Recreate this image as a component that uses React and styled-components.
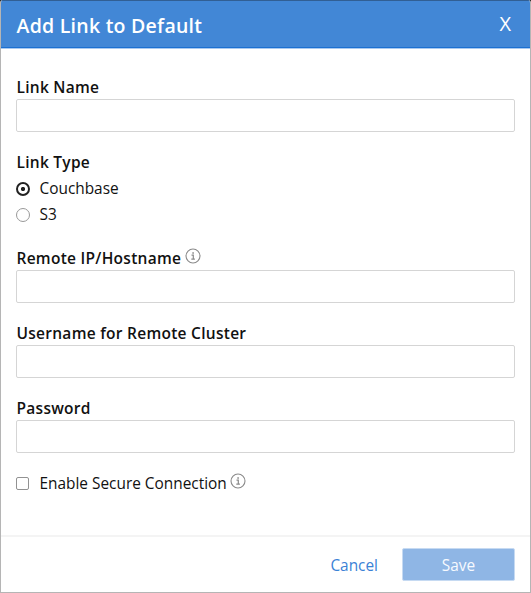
import React from "react";
import styled, { createGlobalStyle } from "styled-components";

const GlobalStyle = createGlobalStyle`
  * { box-sizing: border-box; }
  body { margin: 0; background: #222; font-family: "Open Sans", sans-serif; }
`;

const Dialog = styled.form`
  display: flex;
  flex-direction: column;
  width: 531px;
  height: 593px;
  border: 1px solid #b5b5b5;
  border-top: 0;
  border-radius: 3px 3px 0 0;
  background: #fff;
  color: #111;
  overflow: hidden;
`;

const Header = styled.header`
  display: flex;
  justify-content: space-between;
  align-items: center;
  height: 49px;
  margin: 0 -1px;
  padding: 1px 20px 0 16.5px;
  flex: none;
  border-top: 1px solid #315f94;
  border-bottom: 1px solid #a9c9ef;
  box-shadow: inset 0 -1px #1b70d2;
  background: #4287d6;
  color: #fff;
`;

const Title = styled.h1`
  margin: 0;
  padding-top: 1px;
  font-size: 19.5px;
  line-height: 28px;
  font-weight: 600;
  letter-spacing: 0.25px;
  white-space: nowrap;
`;

const CloseButton = styled.button`
  border: 0;
  padding: 0 0 3px;
  background: none;
  color: inherit;
  font: 400 20px/24px "Open Sans", sans-serif;
`;

const Body = styled.div`
  flex: 1;
  padding: 26px 15px 0;
`;

const Field = styled.div`
  height: ${(p) => p.$height}px;
`;

const Label = styled.label`
  display: flex;
  align-items: center;
  gap: 4px;
  height: 24px;
  padding-left: 0.5px;
  font-size: 15.5px;
  line-height: 24px;
  font-weight: 600;
  letter-spacing: 0.27px;
  white-space: nowrap;
`;

const Input = styled.input`
  display: block;
  width: 499px;
  height: 33px;
  padding: 0 8px;
  border: 1px solid #d5d5d5;
  border-radius: 2px;
  background: #fff;
  font: 15.4px "Open Sans", sans-serif;
`;

const Choices = styled.div`
  padding-top: 2px;
`;

const Choice = styled.label`
  display: flex;
  align-items: center;
  height: 26px;
  font-size: 15.4px;
  line-height: 26px;
  white-space: nowrap;
`;

const Radio = styled.input`
  appearance: none;
  width: 14px;
  height: 14px;
  margin: 0 9.5px 0 0;
  border: 1px solid #999;
  border-radius: 50%;
  &:checked {
    border: 2px solid #222;
    background: radial-gradient(circle, #222 0 1.7px, transparent 2.5px);
  }
`;

const Checkbox = styled.input`
  appearance: none;
  width: 13px;
  height: 13px;
  margin: 0 10.5px 1px 0;
  border: 1px solid #929292;
  border-radius: 2px;
`;

const InfoSvg = styled.svg`
  flex: none;
  width: 16px;
  height: 16px;
  margin: 0 0 ${(p) => p.$lift || 4}px ${(p) => p.$gap || 0}px;
`;

const Footer = styled.footer`
  display: flex;
  justify-content: flex-end;
  align-items: flex-start;
  height: 57px;
  padding: 11px 15px 0;
  border-top: 2px solid #f4f4f4;
`;

const FooterButton = styled.button`
  height: 33px;
  padding: 2px 0 0;
  border: 0;
  font: 400 15.4px/24px "Open Sans", sans-serif;
`;

const CancelButton = styled(FooterButton)`
  margin-right: 24px;
  background: none;
  color: #3b82d6;
`;

const SaveButton = styled(FooterButton)`
  width: 113px;
  border: 1px solid #c6daf2;
  border-radius: 2px;
  background: #8fb6e5;
  color: #f7faff;
`;

const InfoIcon = ({ gap, lift }) => (
  <InfoSvg $gap={gap} $lift={lift} viewBox="0 0 16 16" fill="none" stroke="#8a8a8a" aria-hidden="true">
    <circle cx="8" cy="8" r="7" strokeWidth="1.1" />
    <path d="M6.5 7.2h1.8v3.9M6.3 11.2h3.6" strokeWidth="1.2" />
    <path d="M7.3 5h1.6" strokeWidth="1.6" />
  </InfoSvg>
);

const TextField = ({ id, label, height, type = "text", info }) => (
  <Field $height={height}>
    <Label htmlFor={id}>{label}{info && <InfoIcon />}</Label>
    <Input id={id} type={type} />
  </Field>
);

export default function App() {
  return (
    <>
      <GlobalStyle />
      <Dialog>
        <Header>
          <Title>Add Link to Default</Title>
          <CloseButton type="button">X</CloseButton>
        </Header>
        <Body>
          <TextField id="name" label="Link Name" height={75} />
          <Field $height={96}>
            <Label as="div">Link Type</Label>
            <Choices>
              <Choice><Radio type="radio" name="type" defaultChecked />Couchbase</Choice>
              <Choice><Radio type="radio" name="type" />S3</Choice>
            </Choices>
          </Field>
          <TextField id="host" label="Remote IP/Hostname" height={75} info />
          <TextField id="user" label="Username for Remote Cluster" height={75} />
          <TextField id="password" label="Password" type="password" height={75} />
          <Choice><Checkbox type="checkbox" />Enable Secure Connection<InfoIcon gap={3.5} lift={6} /></Choice>
        </Body>
        <Footer>
          <CancelButton type="button">Cancel</CancelButton>
          <SaveButton type="button">Save</SaveButton>
        </Footer>
      </Dialog>
    </>
  );
}
